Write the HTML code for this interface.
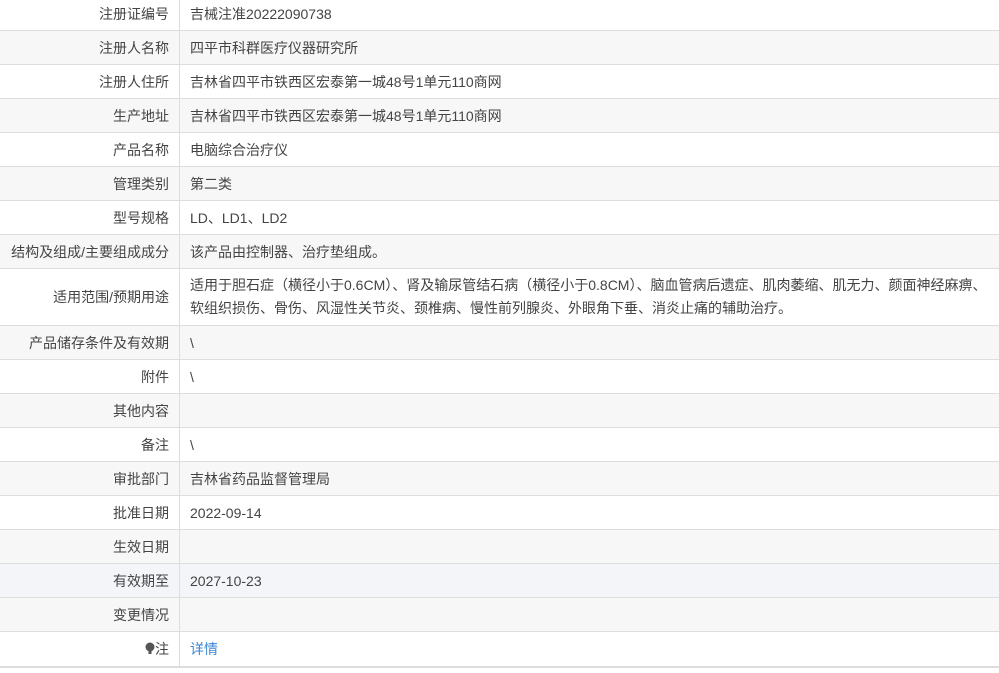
<!DOCTYPE html>
<html><head><meta charset="utf-8"><style>
body{margin:0;background:#fff;font-family:"Liberation Sans","Noto Sans CJK SC",sans-serif;font-size:14px;color:#333;overflow:hidden}
table{border-collapse:collapse;position:absolute;top:-3px;left:0;width:1010px}
td{border-bottom:1px solid #ddd;height:33px;padding:0;vertical-align:middle;white-space:nowrap}
td.l{width:169px;text-align:right;padding-right:10px;border-right:1px solid #ddd;color:#444}
td.v{padding-left:10px;color:#444}
tr.g td{background:#f7f7f7}
tr.h td{background:#f3f5f9}
tr.t td{height:56px}
tr.t td.v{line-height:23px}
tr.last td{border-bottom:2px solid #ddd}
a{color:#3a86d6;text-decoration:none}
</style></head><body>
<table>
<tr><td class="l">注册证编号</td><td class="v">吉械注准20222090738</td></tr>
<tr class="g"><td class="l">注册人名称</td><td class="v">四平市科群医疗仪器研究所</td></tr>
<tr><td class="l">注册人住所</td><td class="v">吉林省四平市铁西区宏泰第一城48号1单元110商网</td></tr>
<tr class="g"><td class="l">生产地址</td><td class="v">吉林省四平市铁西区宏泰第一城48号1单元110商网</td></tr>
<tr><td class="l">产品名称</td><td class="v">电脑综合治疗仪</td></tr>
<tr class="g"><td class="l">管理类别</td><td class="v">第二类</td></tr>
<tr><td class="l">型号规格</td><td class="v">LD、LD1、LD2</td></tr>
<tr class="g"><td class="l">结构及组成/主要组成成分</td><td class="v">该产品由控制器、治疗垫组成。</td></tr>
<tr class="t"><td class="l">适用范围/预期用途</td><td class="v">适用于胆石症（横径小于0.6CM）、肾及输尿管结石病（横径小于0.8CM）、脑血管病后遗症、肌肉萎缩、肌无力、颜面神经麻痹、<br>软组织损伤、骨伤、风湿性关节炎、颈椎病、慢性前列腺炎、外眼角下垂、消炎止痛的辅助治疗。</td></tr>
<tr class="g"><td class="l">产品储存条件及有效期</td><td class="v">\</td></tr>
<tr><td class="l">附件</td><td class="v">\</td></tr>
<tr class="g"><td class="l">其他内容</td><td class="v"></td></tr>
<tr><td class="l">备注</td><td class="v">\</td></tr>
<tr class="g"><td class="l">审批部门</td><td class="v">吉林省药品监督管理局</td></tr>
<tr><td class="l">批准日期</td><td class="v">2022-09-14</td></tr>
<tr class="g"><td class="l">生效日期</td><td class="v"></td></tr>
<tr class="h"><td class="l">有效期至</td><td class="v">2027-10-23</td></tr>
<tr class="g"><td class="l">变更情况</td><td class="v"></td></tr>
<tr class="last"><td class="l" style="height:34px"><svg width="10" height="13" viewBox="0 0 10 13" style="vertical-align:-1px"><circle cx="5" cy="5" r="4.5" fill="#555"/><rect x="3.5" y="9" width="3" height="3" fill="#555"/></svg>注</td><td class="v"><a>详情</a></td></tr>
</table>
</body></html>
